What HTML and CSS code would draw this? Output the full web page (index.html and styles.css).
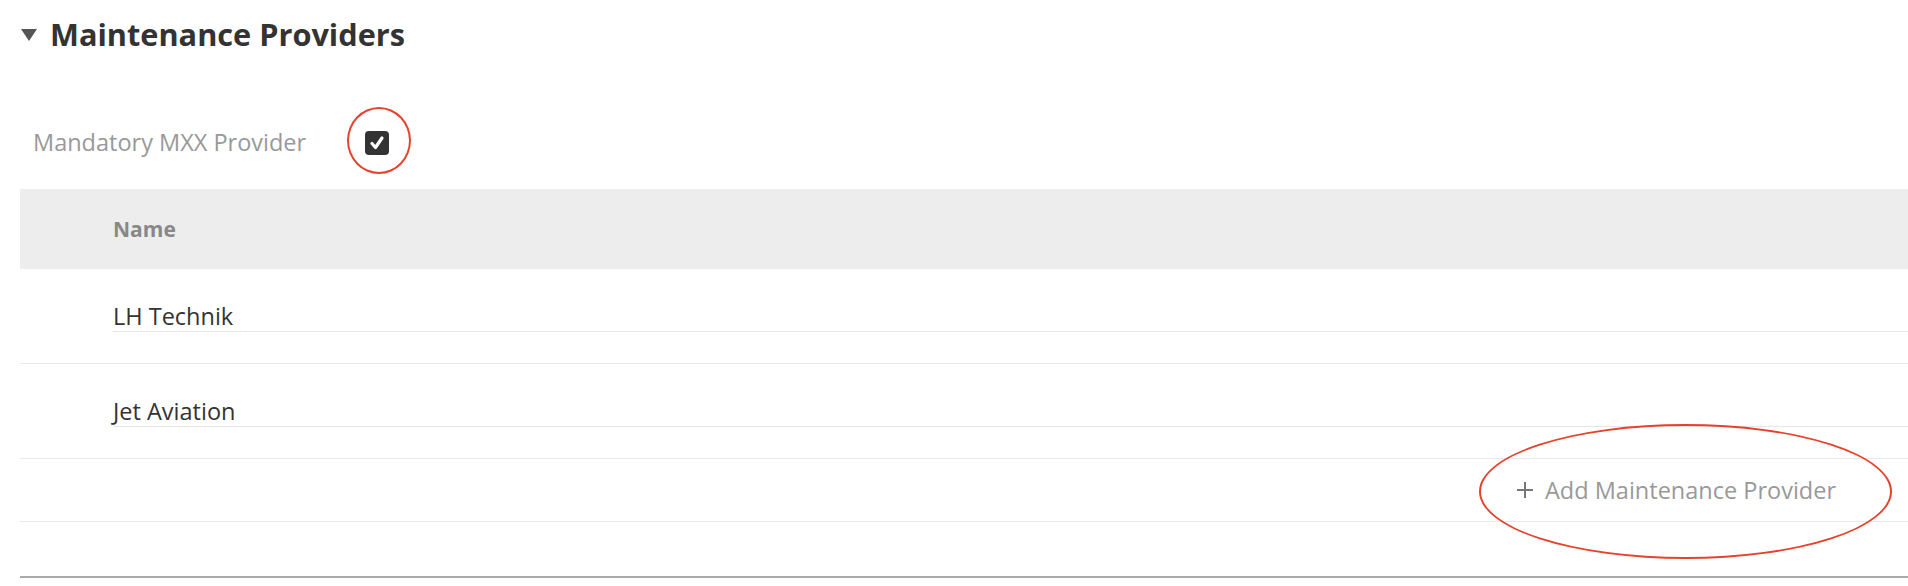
FILE: index.html
```html
<!DOCTYPE html>
<html lang="en">

<head>
    <meta charset="UTF-8">
    <meta name="viewport" content="width=device-width, initial-scale=1.0" />
    <title>Maintenance Providers</title>

    <link rel="stylesheet" href="styles.css">
</head>

<body>
    <section class="panel">
        <h2 class="panel-title"><span class="caret"></span>Maintenance Providers</h2>

        <div class="field-row">
            <label class="field-label" for="mxx">Mandatory MXX Provider</label>
            <span class="check-wrap">
                <span class="checkbox" id="mxx">
                    <svg width="16" height="16" viewBox="0 0 16 16">
                        <polyline points="3,8.5 6.5,12.5 13,3" fill="none" stroke="#fff" stroke-width="3.2" stroke-linecap="round" stroke-linejoin="round" />
                    </svg>
                </span>
                <span class="mark-circle"></span>
            </span>
        </div>

        <table class="grid">
            <thead>
                <tr>
                    <th>Name</th>
                </tr>
            </thead>
            <tbody>
                <tr>
                    <td><div class="cell-input">LH Technik</div></td>
                </tr>
                <tr>
                    <td><div class="cell-input">Jet Aviation</div></td>
                </tr>
                <tr class="add-row">
                    <td>
                        <span class="add-wrap">
                            <button class="add-btn">
                                <svg width="18" height="18" viewBox="0 0 18 18">
                                    <path d="M9 1v16M1 9h16" stroke="#777" stroke-width="2" />
                                </svg>
                                Add Maintenance Provider
                            </button>
                            <span class="mark-ellipse"></span>
                        </span>
                    </td>
                </tr>
            </tbody>
        </table>

        <div class="panel-footer"></div>
    </section>
</body>

</html>
```

FILE: styles.css
```css
* {
    margin: 0;
    padding: 0;
    box-sizing: border-box;
}

html {
    background-color: #fff;
    font-family: 'Open Sans', 'Noto Sans', sans-serif;
}

body {
    overflow: hidden;
}

.panel {
    width: 100%;
    padding-left: 20px;
}

.panel-title {
    display: flex;
    align-items: center;
    padding: 16px 0 0 1px;
    height: 52px;
    font-size: 30.7px;
    line-height: 36px;
    font-weight: 700;
    color: #333;
}

.caret {
    width: 0;
    height: 0;
    border-left: 8px solid transparent;
    border-right: 8px solid transparent;
    border-top: 12px solid #555;
    margin: 2px 13px 0 0;
}

.field-row {
    display: flex;
    align-items: center;
    height: 48px;
    margin: 66px 0 23px;
    padding-left: 13px;
}

.field-label {
    width: 332px;
    font-size: 23.5px;
    color: #999;
}

.check-wrap {
    position: relative;
    display: inline-block;
    width: 24px;
    height: 24px;
    margin-top: 2px;
}

.checkbox {
    display: flex;
    align-items: center;
    justify-content: center;
    width: 24px;
    height: 24px;
    border-radius: 4px;
    background-color: #333;
}

.mark-circle {
    position: absolute;
    left: -18px;
    top: -24px;
    width: 64px;
    height: 67px;
    border: 2.5px solid #e5432d;
    border-radius: 50%;
}

.grid {
    width: 100%;
    border-collapse: collapse;
}

.grid th {
    height: 80px;
    padding-left: 93px;
    text-align: left;
    font-size: 21px;
    font-weight: 700;
    color: #888;
    background-color: #ededed;
}

.grid td {
    padding: 32px 0 31px 93px;
    border-bottom: 1px solid #e9e9e9;
}

.cell-input {
    font-size: 23.5px;
    line-height: 30px;
    color: #333;
    border-bottom: 1px solid #e6e6e6;
}

.add-row td {
    height: 63px;
    padding: 0 72px 0 0;
    text-align: right;
}

.add-wrap {
    position: relative;
    display: inline-block;
}

.add-btn {
    display: flex;
    align-items: center;
    gap: 11px;
    border: none;
    background: none;
    font-family: inherit;
    font-size: 23.5px;
    color: #999;
}

.mark-ellipse {
    position: absolute;
    left: -37px;
    right: -56px;
    top: 50%;
    height: 135px;
    margin-top: -66px;
    border: 2.5px solid #e5432d;
    border-radius: 50%;
}

.panel-footer {
    height: 56px;
    border-bottom: 2px solid #aaa;
}
```
